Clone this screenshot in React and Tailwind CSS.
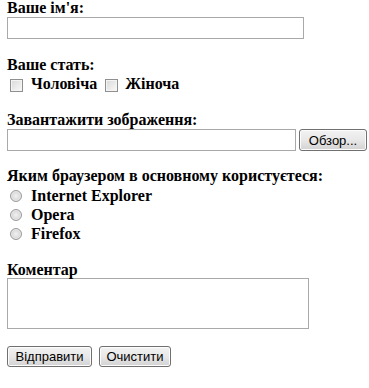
import React from 'react';

const serif = "font-['Liberation_Serif','Times_New_Roman',serif]";
const sans = "font-['Liberation_Sans',Arial,sans-serif]";

const Label = ({ children, className = '' }) => (
  <div className={`text-[16px] leading-[16px] font-bold text-black ${className}`}>{children}</div>
);

const Checkbox = () => (
  <input
    type="checkbox"
    className="appearance-none w-[13px] h-[13px] shrink-0 border border-[#8f8f8f] bg-linear-to-br from-[#d8d8d8] to-[#fafafa] shadow-[inset_0_0_0_1px_#f4f4f4]"
  />
);

const Radio = () => (
  <input
    type="radio"
    name="browser"
    className="appearance-none w-[12px] h-[12px] shrink-0 rounded-full border border-[#9a9a9a] bg-radial from-[#f2f2f2] to-[#c9c9c9] shadow-[inset_0_0_0_1px_#eaeaea]"
  />
);

const WinButton = ({ children, className = '' }) => (
  <button
    type="button"
    className={`h-[21px] shrink-0 rounded-[3px] border border-[#707070] bg-linear-to-b from-[#f2f2f2] via-[#e8e8e8] to-[#d2d2d2] text-[13px] leading-none text-black shadow-[inset_0_0_0_1px_#fcfcfc] ${sans} ${className}`}
  >
    {children}
  </button>
);

export default function App() {
  return (
    <div className={`bg-white w-[369px] h-[388px] px-[7px] overflow-hidden ${serif}`}>
      <Label>Ваше ім'я:</Label>
      <input type="text" className="block mt-[1px] w-[297px] h-[22px] border border-[#a9a9a9] bg-white" />

      <Label className="mt-[18px]">Ваше стать:</Label>
      <div className="flex items-end mt-[3px] h-[16px] text-[16px] leading-[16px] font-bold">
        <span className="ml-[3px] flex"><Checkbox /></span>
        <span className="ml-[8px]">Чоловіча</span>
        <span className="ml-[8px] flex"><Checkbox /></span>
        <span className="ml-[7px]">Жіноча</span>
      </div>

      <Label className="mt-[20px]">Завантажити зображення:</Label>
      <div className="flex items-center mt-[1px] h-[22px]">
        <input type="text" className="block shrink-0 w-[289px] h-[22px] border border-[#a9a9a9] bg-white" />
        <WinButton className="ml-[3px] w-[68px] h-[22px]">Обзор...</WinButton>
      </div>

      <Label className="mt-[17px]">Яким браузером в основному користуєтеся:</Label>
      <div className="mt-[2px] flex flex-col text-[16px] leading-[19px] font-bold">
        {['Internet Explorer', 'Opera', 'Firefox'].map((b) => (
          <label key={b} className="flex items-center h-[19px]">
            <span className="ml-[3px] flex"><Radio /></span>
            <span className="ml-[9px]">{b}</span>
          </label>
        ))}
      </div>

      <Label className="mt-[19px]">Коментар</Label>
      <textarea className="block w-[302px] h-[51px] border border-[#a9a9a9] bg-white resize-none" />

      <div className="flex mt-[17px] gap-[7px]">
        <WinButton className="w-[85px]">Відправити</WinButton>
        <WinButton className="w-[72px]">Очистити</WinButton>
      </div>
    </div>
  );
}
